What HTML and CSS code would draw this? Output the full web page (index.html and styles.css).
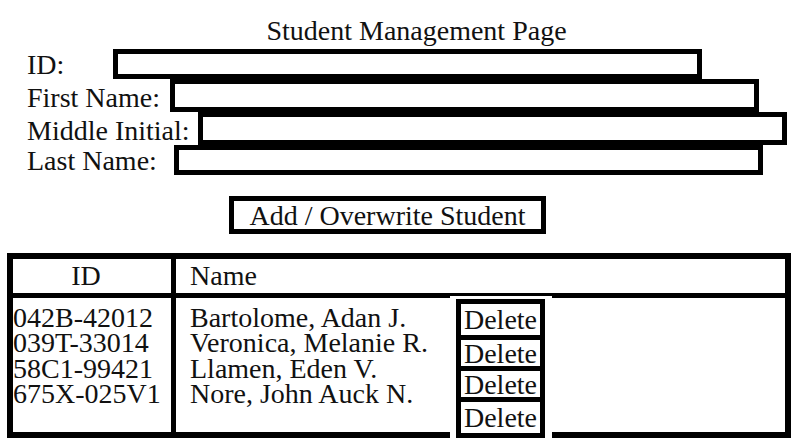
FILE: index.html
```html
<!DOCTYPE html>
<html>
<head>
<meta charset="utf-8">
<title>Student Management Page</title>
<link rel="stylesheet" href="styles.css">
</head>
<body>
<div class="page">
  <h1 class="title">Student Management Page</h1>
  <form class="form">
    <div class="row row-id"><label class="label label-id">ID:</label><input class="field" type="text"></div>
    <div class="row row-first"><label class="label label-first">First Name:</label><input class="field" type="text"></div>
    <div class="row row-middle"><label class="label label-middle">Middle Initial:</label><input class="field" type="text"></div>
    <div class="row row-last"><label class="label label-last">Last Name:</label><input class="field" type="text"></div>
  </form>
  <button class="add-btn" type="button">Add / Overwrite Student</button>
  <div class="table">
    <div class="thead">
      <div class="th th-id">ID</div>
      <div class="th th-name">Name</div>
    </div>
    <div class="tbody">
      <div class="col-ids">
        <div class="cell">042B-42012</div>
        <div class="cell">039T-33014</div>
        <div class="cell">58C1-99421</div>
        <div class="cell">675X-025V1</div>
      </div>
      <div class="col-names">
        <div class="cell">Bartolome, Adan J.</div>
        <div class="cell">Veronica, Melanie R.</div>
        <div class="cell">Llamen, Eden V.</div>
        <div class="cell">Nore, John Auck N.</div>
      </div>
      <div class="col-actions">
        <button class="del" type="button">Delete</button>
        <button class="del" type="button">Delete</button>
        <button class="del" type="button">Delete</button>
        <button class="del" type="button">Delete</button>
      </div>
      <div class="col-rest"></div>
    </div>
  </div>
</div>
</body>
</html>
```
FILE: styles.css
```css
* { box-sizing: border-box; }
html, body { margin: 0; padding: 0; background: #fff; }
body {
  font-family: "Liberation Serif", "Times New Roman", serif;
  font-size: 28px;
  color: #111;
}
.page { padding-top: 16px; }
.title {
  margin: 0;
  padding-left: 34px;
  font-size: 28px;
  font-weight: normal;
  line-height: 30px;
  height: 30px;
  text-align: center;
}
.form { margin: 3px 0 0 0; padding-left: 27px; }
.row { display: flex; align-items: stretch; }
.row-id { height: 30px; }
.row-first { height: 33px; }
.row-middle { height: 33px; }
.row-last { height: 30px; }
.label {
  flex: none;
  line-height: 28px;
  align-self: flex-end;
  white-space: nowrap;
}
.label-id { width: 86px; }
.label-first { width: 143px; }
.label-middle { width: 171px; }
.label-last { width: 147px; }
.field {
  width: 589px;
  height: 100%;
  border: 5px solid #000;
  margin: 0;
  padding: 0;
  background: #fff;
  outline: none;
  font: inherit;
}
.add-btn {
  display: block;
  margin: 21px 0 0 229px;
  width: 317px;
  height: 38px;
  border: 5px solid #000;
  background: #fff;
  padding: 0;
  font: inherit;
  line-height: 27px;
  color: #111;
  text-align: center;
}
.table {
  margin: 19px 0 0 7px;
  width: 784px;
  border: 6px solid #000;
}
.thead {
  display: grid;
  grid-template-columns: 163px 1fr;
  height: 39px;
  border-bottom: 5px solid #000;
}
.th { line-height: 34px; }
.th-id { border-right: 5px solid #000; text-align: center; padding-right: 12px; }
.th-name { padding-left: 14px; }
.tbody {
  display: grid;
  grid-template-columns: 163px 274px 102px 1fr;
  height: 134px;
}
.col-ids { border-right: 5px solid #000; padding: 7px 0 0 0; }
.col-names { padding: 7px 0 0 14px; }
.cell { line-height: 25.3px; white-space: nowrap; }
.col-actions {
  margin: -2px 0 -6px 0;
  padding: 3px 0 0 6px;
  background: #fff;
  display: flex;
  flex-direction: column;
}
.del {
  display: block;
  flex: none;
  width: 89px;
  height: 31px;
  border: 5px solid #000;
  border-bottom: 0;
  background: #fff;
  padding: 0;
  margin: 0;
  font: inherit;
  line-height: 23px;
  color: #111;
  text-align: center;
}
.del:first-child { height: 36px; }
.del:last-child { height: 41px; border-bottom: 5px solid #000; }
```
